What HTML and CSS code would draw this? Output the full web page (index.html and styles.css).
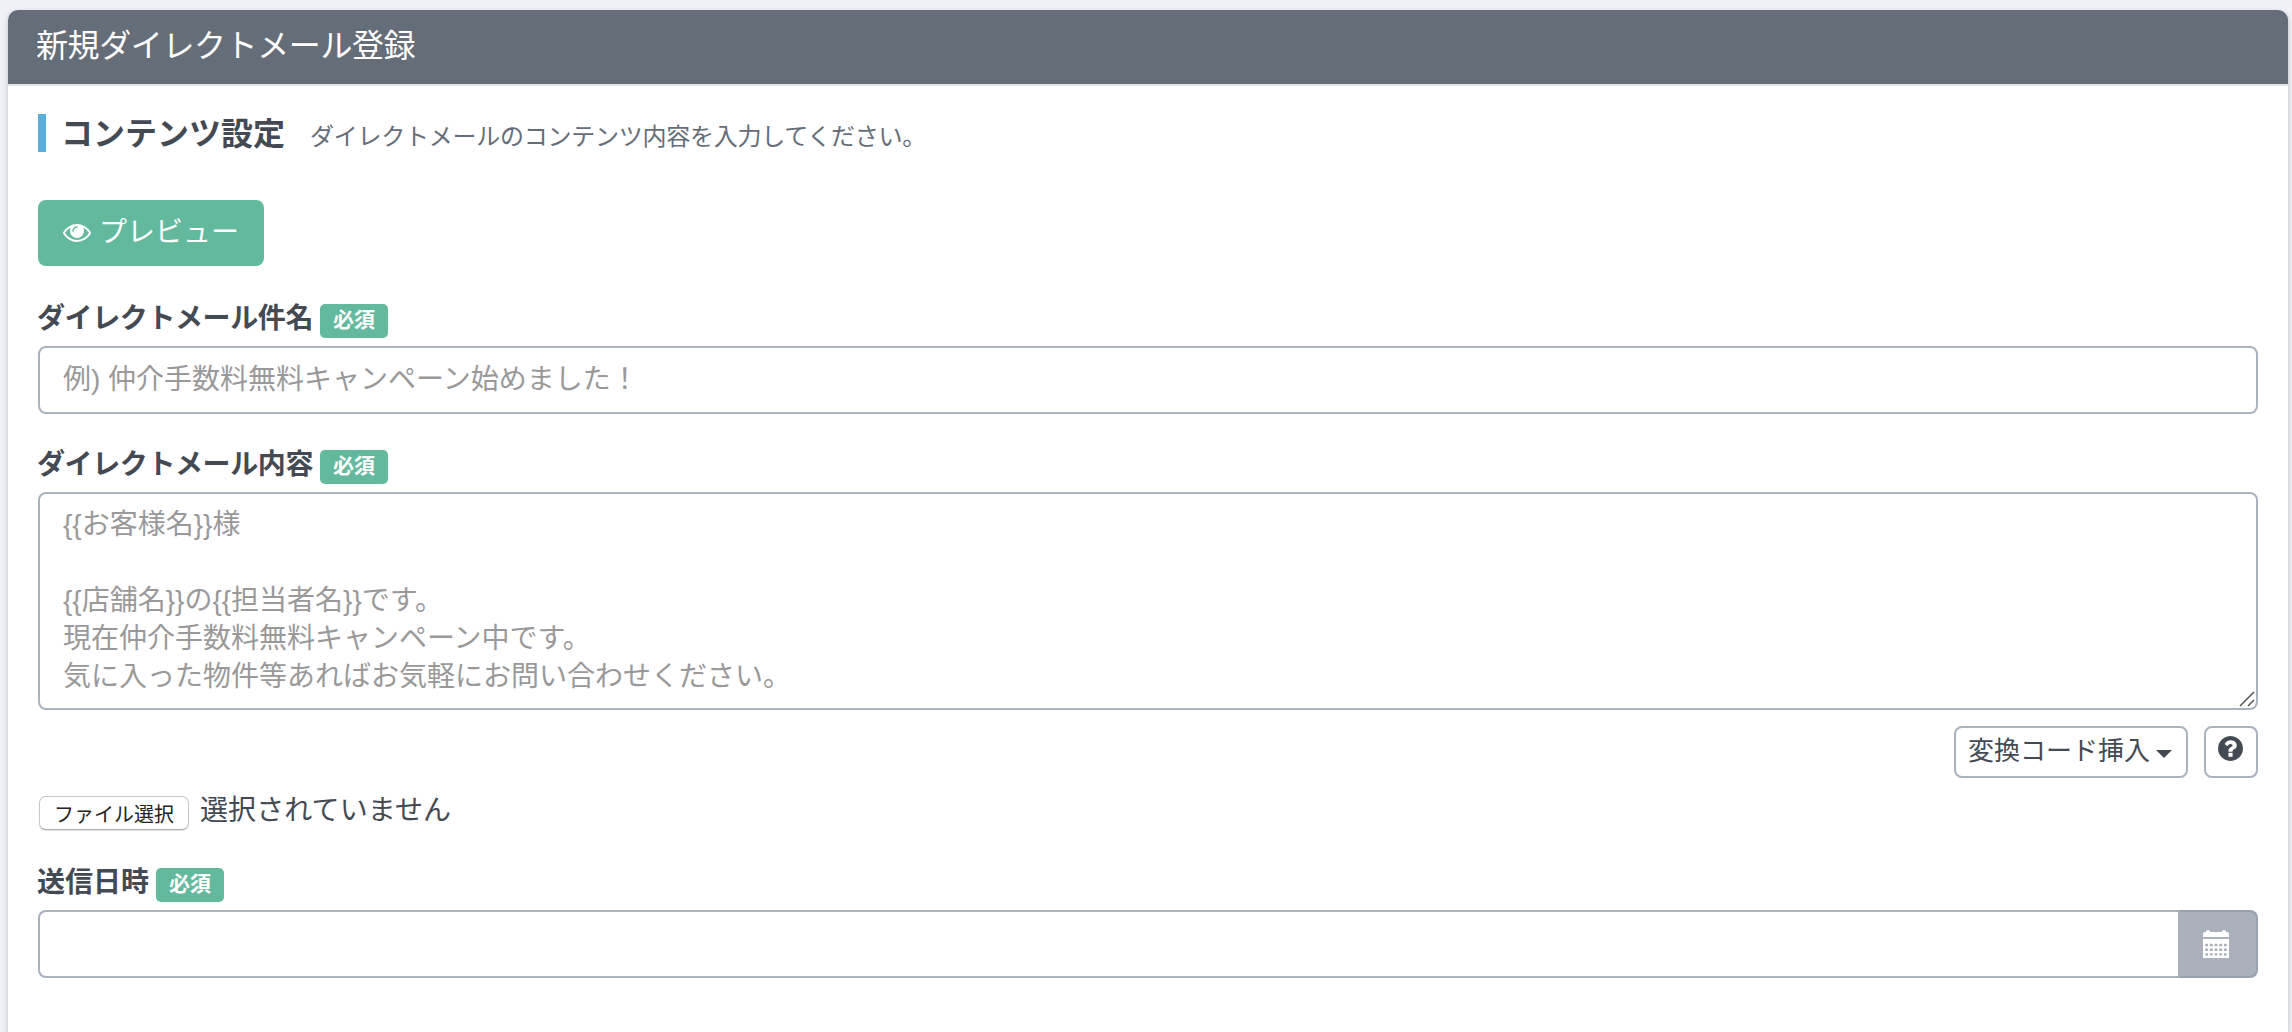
FILE: index.html
```html
<!DOCTYPE html>
<html lang="ja">
<head>
<meta charset="utf-8">
<title>新規ダイレクトメール登録</title>
<link rel="stylesheet" href="styles.css">
</head>
<body>
<main class="card">
  <header class="card-header">新規ダイレクトメール登録</header>
  <form class="card-body">
    <div class="section-head">
      <h2 class="section-title">コンテンツ設定</h2>
      <span class="section-note">ダイレクトメールのコンテンツ内容を入力してください。</span>
    </div>

    <button type="button" class="btn-preview">
      <svg class="icon-eye" viewBox="0 0 1792 1152" aria-hidden="true"><path fill="currentColor" d="M1664 576q-152-236-381-353 61 104 61 225 0 185-131.500 316.500t-316.500 131.500-316.500-131.500-131.500-316.500q0-121 61-225-229 117-381 353 133 205 333.500 326.500t434.500 121.500 434.500-121.500 333.500-326.500zM944 192q0-20-14-34t-34-14q-125 0-214.500 89.500t-89.500 214.500q0 20 14 34t34 14 34-14 14-34q0-86 61-147t147-61q20 0 34-14t14-34zM1792 576q0 34-20 69-140 230-376.500 368.500t-499.500 138.500-499.500-139-376.500-368q-20-35-20-69t20-69q140-229 376.500-368t499.500-139 499.500 139 376.500 368q20 35 20 69z"/></svg>
      <span>プレビュー</span>
    </button>

    <div class="field">
      <label class="label" for="subject"><span class="label-text">ダイレクトメール件名</span><span class="badge">必須</span></label>
      <input class="control" id="subject" type="text" placeholder="例) 仲介手数料無料キャンペーン始めました！">
    </div>

    <div class="field">
      <label class="label" for="content"><span class="label-text">ダイレクトメール内容</span><span class="badge">必須</span></label>
      <div class="textarea-wrap">
        <textarea class="control textarea" id="content" placeholder="{{お客様名}}様

{{店舗名}}の{{担当者名}}です。
現在仲介手数料無料キャンペーン中です。
気に入った物件等あればお気軽にお問い合わせください。"></textarea>
        <svg class="grip" viewBox="0 0 16 16" aria-hidden="true"><path d="M1 15L15 1M9 15L15 9" fill="none" stroke="#555" stroke-width="1.5"/></svg>
      </div>
    </div>

    <div class="tools">
      <button type="button" class="btn-outline btn-insert">変換コード挿入<span class="caret"></span></button>
      <button type="button" class="btn-outline btn-help" aria-label="ヘルプ">
        <svg class="icon-help" viewBox="0 0 1536 1536" aria-hidden="true"><path fill="currentColor" d="M896 1248v-192q0-14-9-23t-23-9h-192q-14 0-23 9t-9 23v192q0 14 9 23t23 9h192q14 0 23-9t9-23zM1152 576q0-88-55.500-163t-138.500-116-170-41q-243 0-371 213-15 24 8 42l132 100q7 6 19 6 16 0 25-12 53-68 86-92 34-24 86-24 48 0 85.500 26t37.500 59q0 38-20 61t-68 45q-63 28-115.500 86.500t-52.500 125.500v36q0 14 9 23t23 9h192q14 0 23-9t9-23q0-19 21.500-49.500t54.500-49.500q32-18 49-28.500t46-35 44.500-48 28-60.500 12.500-81zM1536 768q0 209-103 385.500t-279.500 279.500-385.500 103-385.500-103-279.500-279.500-103-385.500 103-385.500 279.500-279.500 385.500-103 385.500 103 279.500 279.500 103 385.500z"/></svg>
      </button>
    </div>

    <div class="file">
      <button type="button" class="file-button">ファイル選択</button>
      <span class="file-status">選択されていません</span>
    </div>

    <div class="field">
      <label class="label" for="sent-at"><span class="label-text label-kanji">送信日時</span><span class="badge">必須</span></label>
      <div class="input-group">
        <input class="control" id="sent-at" type="text">
        <span class="addon">
          <svg class="icon-calendar" viewBox="0 0 26 28" aria-hidden="true">
            <path fill="#fff" d="M0 7V4Q0 2 2 2H3Q3 0 5 0T7 2H19Q19 0 21 0T23 2H24Q26 2 26 4V7ZM0 9H26V28H0Z"/>
            <path stroke="#aab1bd" stroke-width="2.400" stroke-dasharray="2.800 1.900" d="M2.200 15H24M2.200 19.700H24M2.200 24.400H24"/>
          </svg>
        </span>
      </div>
    </div>
  </form>
</main>
</body>
</html>
```
FILE: styles.css
```css
* { box-sizing: border-box; }

body {
  margin: 0;
  height: 1032px;
  padding: 10px 4px 0 8px;
  overflow: hidden;
  background: #f0f1f6;
  color: #434a54;
  font-family: "Liberation Sans", "Noto Sans CJK JP", sans-serif;
  font-size: 28px;
  line-height: 38px;
}

button, input, textarea { font: inherit; color: inherit; }

.card {
  height: 1022px;
  background: #fff;
  border-radius: 10px 10px 0 0;
  box-shadow: 0 2px 5px rgba(67, 74, 84, .3);
}

.card-header {
  height: 76px;
  padding: 17px 28px 0;
  border-bottom: 2px solid #e6e6e8;
  border-radius: 10px 10px 0 0;
  background: #656d78;
  background-clip: padding-box;
  color: #fff;
  font-size: 32px;
  letter-spacing: -.4px;
}

.card-body { padding: 28px 30px 0; }

.section-head {
  display: flex;
  height: 38px;
  padding-left: 15px;
  border-left: 8px solid #5aaedb;
}

.section-title {
  margin: 1px 25px 0 0;
  font-size: 32px;
  font-weight: 700;
}

.section-note {
  padding-top: 4px;
  color: #656d78;
  font-size: 24px;
  letter-spacing: -.25px;
}

.btn-preview {
  display: flex;
  gap: 8px;
  width: 226px;
  height: 66px;
  margin: 48px 0 38px;
  padding: 14px 0 0 25px;
  border: 0;
  border-radius: 8px;
  background: #62b99e;
  color: #fff;
  white-space: nowrap;
}

.icon-eye { width: 28px; height: 18px; margin-top: 10px; }

.field { margin-bottom: 36px; }

.label {
  display: flex;
  align-items: flex-start;
  height: 42px;
  font-weight: 700;
}

.label-text { margin: -4px 0 0 -1px; letter-spacing: -.4px; }
.label-kanji { letter-spacing: 0; }

.badge {
  width: 68px;
  height: 34px;
  margin-left: 7px;
  border-radius: 5px;
  background: #62b99e;
  color: #fff;
  font-size: 21px;
  line-height: 32px;
  text-align: center;
}

.control {
  display: block;
  width: 100%;
  height: 68px;
  margin: 0;
  padding: 12px 23px;
  border: 2px solid #aab2bd;
  border-radius: 8px;
  outline: 0;
  background: #fff;
}

.control::placeholder { color: #999; opacity: 1; }

.textarea-wrap { position: relative; height: 218px; }
.textarea { height: 218px; resize: none; overflow: hidden; }
.grip { position: absolute; right: 3px; bottom: 3px; width: 16px; height: 16px; }

.tools {
  display: flex;
  justify-content: flex-end;
  gap: 16px;
  margin-top: -20px;
}

.btn-outline {
  display: flex;
  height: 52px;
  padding: 4px 0 0 12px;
  border: 2px solid #aab2bd;
  border-radius: 8px;
  background: #fff;
  white-space: nowrap;
}

.btn-insert { width: 234px; font-size: 26px; }

.caret {
  margin: 18px 0 0 6px;
  border: 8px solid transparent;
  border-top-color: currentColor;
  border-bottom: 0;
}

.btn-help { width: 54px; }
.icon-help { width: 25px; height: 25px; margin-top: 4px; }

.file {
  display: flex;
  gap: 11px;
  height: 34px;
  margin: 18px 0 38px 1px;
}

.file-button {
  width: 150px;
  height: 34px;
  padding: 3px 0 0;
  border: 1px solid #c8c8c8;
  border-bottom-color: #adadad;
  border-radius: 7px;
  background: #fff;
  box-shadow: 0 1px 1px rgba(0, 0, 0, .13);
  color: #222;
  font-size: 20px;
  line-height: 30px;
}

.file-status { margin-top: -4px; letter-spacing: .1px; }

.input-group { display: flex; }
.input-group .control { flex: 1; width: auto; border-right: 0; border-radius: 8px 0 0 8px; }

.addon {
  width: 80px;
  height: 68px;
  padding: 18px 0 0 23px;
  border: 2px solid #98a1ad;
  border-left-color: #aab1bd;
  border-radius: 0 8px 8px 0;
  background: #aab1bd;
}

.icon-calendar { display: block; width: 26px; height: 28px; }
```
